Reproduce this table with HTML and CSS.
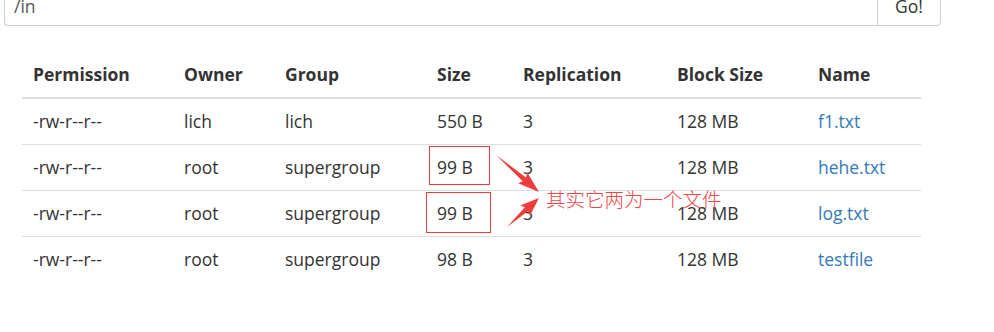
FILE: index.html
```html
<!DOCTYPE html>
<html lang="zh-CN">

<head>
  <meta charset="UTF-8">
  <title>Browse Directory</title>
  <link rel="stylesheet" href="styles.css">
</head>

<body>
  <div class="browser">
    <!-- Path bar -->
    <div class="path-bar">
      <input class="path-input" type="text" value="/in">
      <button class="path-go">Go!</button>
    </div>

    <!-- Directory listing -->
    <table class="listing">
      <thead>
        <tr>
          <th class="col-perm">Permission</th>
          <th class="col-owner">Owner</th>
          <th class="col-group">Group</th>
          <th class="col-size">Size</th>
          <th class="col-repl">Replication</th>
          <th class="col-block">Block Size</th>
          <th class="col-name">Name</th>
        </tr>
      </thead>
      <tbody>
        <tr>
          <td>-rw-r--r--</td>
          <td>lich</td>
          <td>lich</td>
          <td>550 B</td>
          <td>3</td>
          <td>128 MB</td>
          <td><a href="#">f1.txt</a></td>
        </tr>
        <tr>
          <td>-rw-r--r--</td>
          <td>root</td>
          <td>supergroup</td>
          <td>99 B</td>
          <td>3</td>
          <td>128 MB</td>
          <td><a href="#">hehe.txt</a></td>
        </tr>
        <tr>
          <td>-rw-r--r--</td>
          <td>root</td>
          <td>supergroup</td>
          <td>99 B</td>
          <td>3</td>
          <td>128 MB</td>
          <td><a href="#">log.txt</a></td>
        </tr>
        <tr>
          <td>-rw-r--r--</td>
          <td>root</td>
          <td>supergroup</td>
          <td>98 B</td>
          <td>3</td>
          <td>128 MB</td>
          <td><a href="#">testfile</a></td>
        </tr>
      </tbody>
    </table>

    <!-- 标注：两个 99 B 的文件 -->
    <svg class="notes" width="994" height="332" viewBox="0 0 994 332">
      <rect x="429.5" y="146.5" width="60" height="38" fill="none" stroke="#ee3b3b" stroke-width="1" />
      <rect x="426.5" y="192.5" width="64" height="40" fill="none" stroke="#ee3b3b" stroke-width="1" />
      <polygon fill="#ee3b3b" points="496,155 522.7,181.2 518.2,183.3 539,192 527.4,172.7 525.9,177.4" />
      <polygon fill="#ee3b3b" points="507,227 528.2,210.9 530,215.5 539,198 520.2,205.5 524.8,207.3" />
    </svg>
    <div class="note-text">其实它两为一个文件</div>
  </div>
</body>

</html>
```

FILE: styles.css
```css
body {
  margin: 0;
  padding: 0;
  background: #fff;
}

/* Hele visningen */
.browser {
  position: relative;
  width: 994px;
  height: 332px;
  overflow: hidden;
  font-family: 'Open Sans', 'Noto Sans', sans-serif;
  font-size: 17.5px;
  color: #333;
}

/* Sti-felt med knapp */
.path-bar {
  display: flex;
  width: 937px;
  height: 40px;
  margin: -14px 0 0 4px;
}

.path-input {
  flex: 1;
  height: 40px;
  box-sizing: border-box;
  padding: 0 9px;
  border: 1px solid #ccc;
  border-right: none;
  border-radius: 4px 0 0 4px;
  font-family: inherit;
  font-size: 17.5px;
  color: #555;
  outline: none;
  box-shadow: inset 0 1px 1px rgba(0, 0, 0, 0.075);
}

.path-go {
  width: 64px;
  height: 40px;
  box-sizing: border-box;
  padding: 0;
  border: 1px solid #ccc;
  border-radius: 0 4px 4px 0;
  background: #fff;
  font-family: inherit;
  font-size: 17.5px;
  color: #333;
}

/* Tabell */
.listing {
  width: 899px;
  margin: 26px 0 0 22px;
  border-collapse: collapse;
  border-spacing: 0;
}

.listing th,
.listing td {
  padding: 10px 11px;
  line-height: 25px;
  text-align: left;
  vertical-align: top;
  white-space: nowrap;
}

.listing th {
  font-weight: 700;
  border-bottom: 2px solid #ddd;
}

.listing td {
  border-top: 1px solid #ddd;
}

.listing thead + tbody tr:first-child td {
  border-top: none;
}

.col-perm { width: 129px; }
.col-owner { width: 79px; }
.col-group { width: 130px; }
.col-size { width: 64px; }
.col-repl { width: 132px; }
.col-block { width: 119px; }
.col-name { width: 92px; }

.listing a {
  color: #337ab7;
  text-decoration: none;
}

/* Markeringer oppå tabellen */
.notes {
  position: absolute;
  left: 0;
  top: 0;
  pointer-events: none;
}

.note-text {
  position: absolute;
  left: 546px;
  top: 186px;
  font-family: 'Noto Sans CJK SC', sans-serif;
  font-size: 19.5px;
  line-height: 26px;
  font-weight: 300;
  color: #f04545;
}
```
